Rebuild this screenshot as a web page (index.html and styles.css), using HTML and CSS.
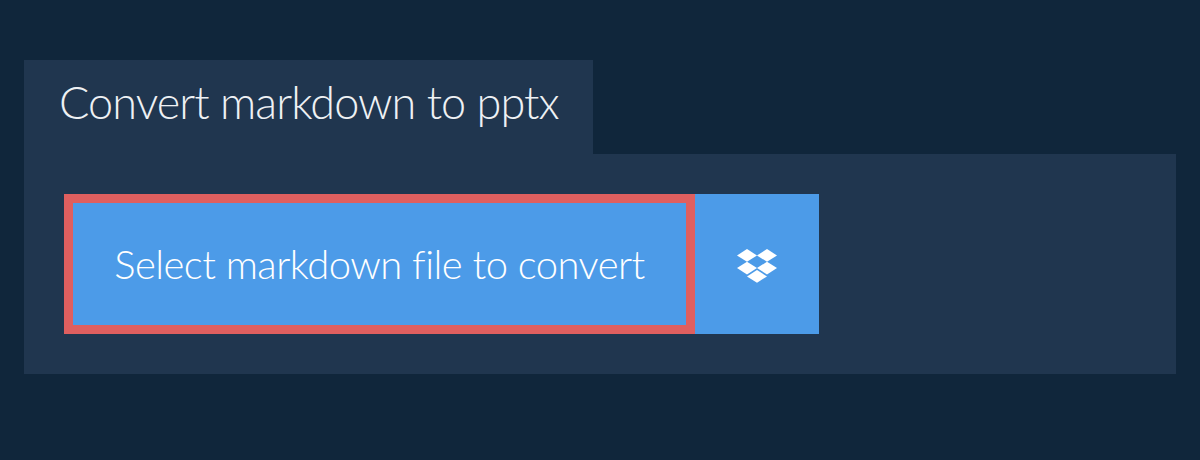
FILE: index.html
```html
<!DOCTYPE html>
<html lang="en">
<head>
  <meta charset="UTF-8">
  <title>Convert markdown to pptx</title>
  <link rel="stylesheet" href="styles.css">
</head>
<body>
  <div class="converter">
    <h1 class="tab">Convert markdown to pptx</h1>
    <div class="panel">
      <button class="btn-select">Select markdown file to convert</button>
      <button class="btn-dropbox" aria-label="Dropbox">
        <svg class="dropbox-icon" viewBox="0 0 40 34" width="40" height="34">
          <g fill="#fff">
            <polygon points="0,6.4 10,0 20,6.4 10,12.8"/>
            <polygon points="20,6.4 30,0 40,6.4 30,12.8"/>
            <polygon points="0,19.1 10,12.7 20,19.1 10,25.5"/>
            <polygon points="20,19.1 30,12.7 40,19.1 30,25.5"/>
            <polygon points="10,27.4 20,21 30,27.4 20,33.8"/>
          </g>
        </svg>
      </button>
    </div>
  </div>
</body>
</html>
```

FILE: styles.css
```css
body {
  margin: 0;
  height: 460px;
  overflow: hidden;
  background: #10263b;
  font-family: Lato, sans-serif;
}

.converter {
  padding: 60px 24px 0;
}

.tab {
  display: inline-block;
  vertical-align: top;
  box-sizing: border-box;
  width: 569px;
  margin: 0;
  padding-left: 35px;
  height: 94px;
  line-height: 84px;
  background: #20364f;
  color: #eef1f4;
  font-size: 45px;
  font-weight: 300;
  letter-spacing: -0.93px;
  white-space: nowrap;
}

.panel {
  display: flex;
  padding: 40px;
  background: #20364f;
}

.btn-select {
  width: 631px;
  height: 140px;
  padding: 0;
  background: #4c9be8;
  border: 9px solid #df5f5f;
  color: #fff;
  font-family: inherit;
  font-size: 40px;
  font-weight: 300;
  letter-spacing: -0.53px;
}

.btn-dropbox {
  display: flex;
  align-items: center;
  justify-content: center;
  width: 124px;
  height: 140px;
  padding: 4px 0 0;
  background: #4c9be8;
  border: none;
}
```
